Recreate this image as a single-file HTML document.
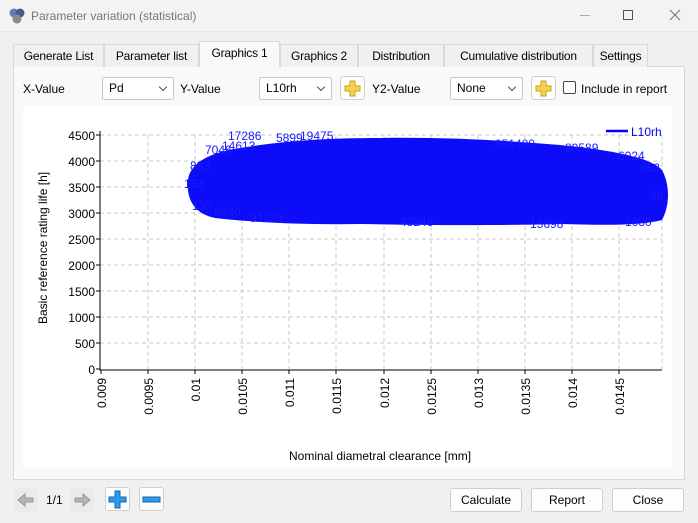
<!DOCTYPE html>
<html><head><meta charset="utf-8"><style>
*{margin:0;padding:0;box-sizing:border-box}
body{width:698px;height:523px;background:#f0f0f0;font-family:"Liberation Sans",sans-serif;font-size:12px;color:#000;position:relative;overflow:hidden}
.abs{position:absolute}
.title{left:0;top:0;width:698px;height:32px;background:#f3f3f3;border-bottom:1px solid #e8e8e8}
.tab{position:absolute;top:44px;height:23px;border:1px solid #d9d9d9;border-bottom:none;background:#f0f0f0;text-align:center;line-height:22px;font-size:12px;letter-spacing:-0.2px}
.panel{left:13px;top:66px;width:672px;height:414px;border:1px solid #d9d9d9;background:#f9f9f9}
.combo{position:absolute;top:77px;height:23px;border:1px solid #c8c8c8;background:#fff;border-radius:2px;line-height:21px;padding-left:6px}
.combo:after{content:"";position:absolute;right:7px;top:6px;width:5px;height:5px;border-right:1px solid #555;border-bottom:1px solid #555;transform:rotate(45deg)}
.pbtn{position:absolute;width:25px;height:24px;border:1px solid #cfcfcf;background:#fdfdfd;border-radius:3px}
.btn{position:absolute;top:488px;height:24px;width:72px;border:1px solid #cfcfcf;background:#fdfdfd;border-radius:3px;text-align:center;line-height:22px}
</style></head><body>
<div class="abs title"></div>
<svg class="abs" style="left:8px;top:7px" width="18" height="18"><circle cx="6" cy="6" r="4.5" fill="#6b7bb0"/><circle cx="12" cy="6" r="4.5" fill="#4a5a90"/><circle cx="9" cy="12" r="4.5" fill="#8a8a8a"/></svg>
<div class="abs" style="left:31px;top:9px;color:#777;font-size:12px">Parameter variation (statistical)</div>
<div class="abs" style="left:580px;top:15px;width:10px;height:1px;background:#aaa"></div>
<div class="abs" style="left:623px;top:10px;width:10px;height:10px;border:1px solid #555"></div>
<svg class="abs" style="left:669px;top:9px" width="12" height="12"><path d="M1 1L11 11M11 1L1 11" stroke="#777" stroke-width="1.1"/></svg>
<div class="abs panel"></div>
<div class="tab" style="left:13px;width:91px">Generate List</div>
<div class="tab" style="left:104px;width:95px">Parameter list</div>
<div class="tab" style="left:199px;top:41px;height:26px;width:81px;background:#f9f9f9">Graphics 1</div>
<div class="tab" style="left:280px;width:78px">Graphics 2</div>
<div class="tab" style="left:358px;width:86px">Distribution</div>
<div class="tab" style="left:444px;width:149px">Cumulative distribution</div>
<div class="tab" style="left:593px;width:654px;width:55px">Settings</div>
<div class="abs" style="left:23px;top:82px">X-Value</div>
<div class="combo" style="left:102px;width:72px">Pd</div>
<div class="abs" style="left:180px;top:82px">Y-Value</div>
<div class="combo" style="left:259px;width:73px">L10rh</div>
<div class="pbtn" style="left:340px;top:76px"><svg width="23" height="22"><path d="M9 4h5v5h5v5h-5v5h-5v-5h-5v-5h5z" fill="#f7d24a" stroke="#c9a020"/></svg></div>
<div class="abs" style="left:372px;top:82px">Y2-Value</div>
<div class="combo" style="left:450px;width:73px">None</div>
<div class="pbtn" style="left:531px;top:76px"><svg width="23" height="22"><path d="M9 4h5v5h5v5h-5v5h-5v-5h-5v-5h5z" fill="#f7d24a" stroke="#c9a020"/></svg></div>
<div class="abs" style="left:563px;top:81px;width:13px;height:13px;border:1px solid #444;border-radius:2px;background:#fff"></div>
<div class="abs" style="left:581px;top:82px">Include in report</div>
<div class="abs" style="left:23px;top:106px;width:649px;height:362px;background:#fff"></div>
<svg class="abs" style="left:0;top:0" width="698" height="523">
<g stroke="#c8c8c8" stroke-dasharray="4,3" stroke-width="1">
<path d="M100 135H662M100 161H662M100 187H662M100 213H662M100 239H662M100 265H662M100 291H662M100 317H662M100 343H662"/>
<path d="M148 135V369M195 135V369M242 135V369M289 135V369M336 135V369M384 135V369M431 135V369M478 135V369M525 135V369M572 135V369M619 135V369M662 135V369"/>
</g>
<path d="M100 131V370H662" stroke="#000" fill="none"/>
<g stroke="#000"><path d="M96 135h4M96 161h4M96 187h4M96 213h4M96 239h4M96 265h4M96 291h4M96 317h4M96 343h4M96 369h4"/>
<path d="M101 370v4M148 370v4M195 370v4M242 370v4M289 370v4M336 370v4M384 370v4M431 370v4M478 370v4M525 370v4M572 370v4M619 370v4"/></g>
<g font-family="Liberation Sans" font-size="12" text-anchor="end">
<text x="95" y="140">4500</text><text x="95" y="166">4000</text><text x="95" y="192">3500</text><text x="95" y="218">3000</text><text x="95" y="244">2500</text><text x="95" y="270">2000</text><text x="95" y="296">1500</text><text x="95" y="322">1000</text><text x="95" y="348">500</text><text x="95" y="374">0</text>
</g>
<g font-family="Liberation Sans" font-size="12" text-anchor="end">
<text transform="translate(106,378) rotate(-90)">0.009</text>
<text transform="translate(153,378) rotate(-90)">0.0095</text>
<text transform="translate(200,378) rotate(-90)">0.01</text>
<text transform="translate(247,378) rotate(-90)">0.0105</text>
<text transform="translate(294,378) rotate(-90)">0.011</text>
<text transform="translate(341,378) rotate(-90)">0.0115</text>
<text transform="translate(389,378) rotate(-90)">0.012</text>
<text transform="translate(436,378) rotate(-90)">0.0125</text>
<text transform="translate(483,378) rotate(-90)">0.013</text>
<text transform="translate(530,378) rotate(-90)">0.0135</text>
<text transform="translate(577,378) rotate(-90)">0.014</text>
<text transform="translate(624,378) rotate(-90)">0.0145</text>
</g>
<text transform="translate(47,324) rotate(-90)" font-family="Liberation Sans" font-size="12">Basic reference rating life [h]</text>
<text x="289" y="460" font-family="Liberation Sans" font-size="12">Nominal diametral clearance [mm]</text>
<path d="M188 180C190 162 212 152 240 148C290 140 330 138 380 138C440 137 500 140 560 145C610 150 650 157 662 170C670 185 670 205 662 220C640 226 600 225 560 224C480 226 420 225 360 224C300 225 250 222 215 218C195 214 186 200 188 180Z" fill="#0c0cf8"/>
<g font-family="Liberation Sans" font-size="12" fill="#1a1aff">
<text x="228" y="140">17286</text><text x="205" y="154">7046</text><text x="222" y="150">14613</text>
<text x="190" y="170">883</text><text x="184" y="188">153</text><text x="192" y="210">133</text><text x="214" y="216">8840</text>
<text x="276" y="142">5899</text><text x="300" y="140">19475</text><text x="495" y="148">851490</text><text x="565" y="152">80589</text>
<text x="618" y="160">6024</text><text x="640" y="172">853</text><text x="625" y="226">1680</text><text x="530" y="228">15698</text>
<text x="250" y="222">91233</text><text x="400" y="226">43248</text><text x="650" y="200">38</text>
</g>
<path d="M606 131h22" stroke="#0000ff" stroke-width="2.5"/>
<text x="631" y="136" font-family="Liberation Sans" font-size="12" fill="#0000ff">L10rh</text>
</svg>
<div class="abs" style="left:14px;top:488px;width:24px;height:24px;border-radius:3px;background:#ebebeb"><svg width="24" height="24"><path d="M4 12l7-6v4h8v4h-8v4z" fill="#b5b5b5" stroke="#999"/></svg></div>
<div class="abs" style="left:46px;top:493px">1/1</div>
<div class="abs" style="left:70px;top:488px;width:24px;height:24px;border-radius:3px;background:#ebebeb"><svg width="24" height="24"><path d="M20 12l-7-6v4H5v4h8v4z" fill="#b5b5b5" stroke="#999"/></svg></div>
<div class="pbtn" style="left:105px;top:487px"><svg width="23" height="22"><path d="M9 3h5v6h6v5h-6v6h-5v-6h-6v-5h6z" fill="#2f9ae8" stroke="#1565b0"/></svg></div>
<div class="pbtn" style="left:139px;top:487px"><svg width="23" height="22"><rect x="3" y="9" width="17" height="5" fill="#2f9ae8" stroke="#1565b0"/></svg></div>
<div class="btn" style="left:450px">Calculate</div>
<div class="btn" style="left:531px">Report</div>
<div class="btn" style="left:612px">Close</div>
</body></html>
